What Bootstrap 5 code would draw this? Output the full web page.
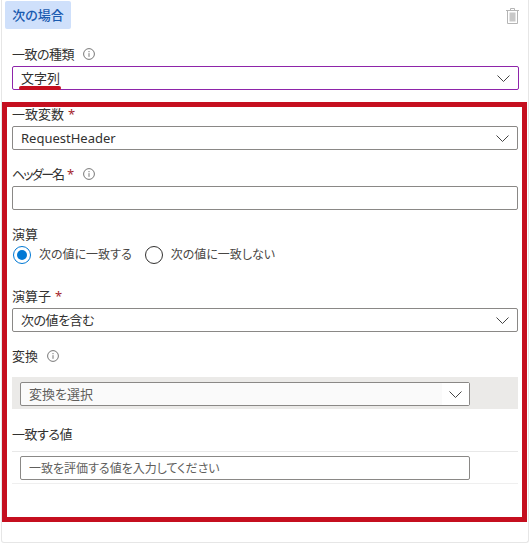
<!DOCTYPE html>
<html lang="ja">
<head>
  <meta charset="UTF-8">
  <meta name="viewport" content="width=device-width, initial-scale=1.0">
  <title>次の場合</title>
  <link href="https://cdn.jsdelivr.net/npm/bootstrap@5.3.3/dist/css/bootstrap.min.css" rel="stylesheet">
  <style>
    body {
      background-color: #fff;
      color: #323130;
      font-family: "Noto Sans", "Noto Sans CJK JP", sans-serif;
      font-size: 13px;
      font-feature-settings: "palt";
      line-height: 18px;
      overflow: hidden;
    }
    .rule-card {
      width: 528px;
      height: 543px;
      margin-left: 1px;
      padding-top: 1px;
      border-left: 1px solid #e6e6e6;
      border-right: 1px solid #e6e6e6;
      border-bottom: 1px solid #e6e6e6;
      border-bottom-left-radius: 3px;
      border-bottom-right-radius: 3px;
    }
    .rule-head {
      height: 28px;
      padding-right: 9px;
    }
    .cond-chip {
      width: 66px;
      height: 28px;
      margin-left: 3px;
      background-color: #cfe0fb;
      border-radius: 2px;
      color: #1a5bb0;
      font-weight: 500;
      line-height: 28px;
      text-align: center;
    }
    .trash-icon {
      width: 13px;
      height: 16px;
      margin-top: 7px;
    }
    .match-block {
      padding: 17px 9px 0 10px;
    }
    .field-label {
      height: 16px;
      line-height: 16px;
      margin-bottom: 4px;
    }
    .tight-text {
      letter-spacing: -0.5px;
    }
    .kana-text {
      letter-spacing: -2px;
    }
    .req {
      color: #a4262c;
      margin-left: 4px;
      letter-spacing: 0;
    }
    .info-icon {
      width: 12px;
      height: 12px;
      margin-left: 9px;
      vertical-align: -1px;
    }
    .fake-select, .fake-input {
      height: 24px;
      background-color: #fff;
      border: 1px solid #8a8886;
      border-radius: 2px;
      padding: 0 8px;
      line-height: 22px;
    }
    .fake-input {
      width: 100%;
      display: block;
      font: inherit;
      font-feature-settings: "palt";
      color: #323130;
      outline: none;
    }
    .fake-input::placeholder {
      color: #605e5c;
      opacity: 1;
      font-size: 12px;
    }
    .select-purple {
      border-color: #8e24aa;
    }
    .chevron {
      width: 13px;
      height: 7px;
    }
    .type-value {
      position: relative;
    }
    .type-value::after {
      content: "";
      position: absolute;
      left: -2px;
      right: -1px;
      top: 19px;
      height: 4px;
      border-radius: 2px;
      background-color: #c50f1f;
    }
    .red-frame {
      width: 525px;
      height: 420px;
      margin-top: 12px;
      border: 5px solid #c50f1f;
      padding: 0 4px 0 5px;
    }
    .first-label {
      margin-top: -1px;
    }
    .form-gap {
      margin-top: 16px;
    }
    .radio-row {
      height: 20px;
      margin-top: -1px;
      margin-left: 1px;
      gap: 8px;
      color: #484644;
      font-size: 12px;
    }
    .radio-dot {
      width: 18px;
      height: 18px;
      border-radius: 50%;
      border: 1px solid #323130;
      background-color: #fff;
      flex: none;
    }
    .radio-dot.on {
      border-color: #0078d4;
      display: flex;
      align-items: center;
      justify-content: center;
    }
    .radio-dot.on::before {
      content: "";
      width: 10px;
      height: 10px;
      border-radius: 50%;
      background-color: #0078d4;
    }
    .radio-second {
      margin-left: 5px;
    }
    .operator-label {
      margin-top: 23px;
    }
    .pick-band {
      height: 32px;
      margin-top: 13px;
      padding: 5px 48px 0 8px;
      background-color: #ebeae8;
    }
    .pick-select {
      height: 24px;
      background-color: #fafafa;
      border: 1px solid #8a8886;
      border-radius: 2px;
      padding-left: 8px;
      line-height: 22px;
      color: #605e5c;
    }
    .pick-arrow {
      width: 27px;
      height: 22px;
      background-color: #fff;
    }
    .value-label {
      margin-top: 17px;
      margin-bottom: 9px;
    }
    .value-row {
      height: 33px;
      padding: 4px 48px 0 8px;
      border-top: 1px solid #e8e8e8;
      border-bottom: 1px solid #efefef;
    }
  </style>
</head>
<body>
  <div class="rule-card">
    <div class="rule-head d-flex justify-content-between align-items-start">
      <div class="cond-chip">次の場合</div>
      <svg class="trash-icon" viewBox="0 0 13 16" fill="none" stroke="#b5b5b5" stroke-width="1">
        <path d="M0 2.5h13M4.5 2.5v-2h4v2M1.5 2.5v13h10v-13"/>
        <rect x="3.5" y="4.5" width="6" height="9" fill="#c8c8c8" stroke="none"/>
      </svg>
    </div>

    <div class="match-block">
      <div class="field-label tight-text">一致の種類<svg class="info-icon" viewBox="0 0 12 12" fill="none" stroke="#777"><circle cx="6" cy="6" r="5.4"/><path d="M6 5.2v3.6M6 3v1.2"/></svg></div>
      <div class="fake-select select-purple d-flex justify-content-between align-items-center">
        <span class="type-value">文字列</span>
        <svg class="chevron" viewBox="0 0 13 7" fill="none" stroke="#444"><path d="M0.5 0.5l6 6 6-6"/></svg>
      </div>
    </div>

    <div class="red-frame">
      <div class="field-label first-label">一致変数<span class="req">*</span></div>
      <div class="fake-select d-flex justify-content-between align-items-center">
        <span>RequestHeader</span>
        <svg class="chevron" viewBox="0 0 13 7" fill="none" stroke="#444"><path d="M0.5 0.5l6 6 6-6"/></svg>
      </div>

      <div class="field-label form-gap"><span class="kana-text">ヘッダー名</span><span class="req">*</span><svg class="info-icon" viewBox="0 0 12 12" fill="none" stroke="#777"><circle cx="6" cy="6" r="5.4"/><path d="M6 5.2v3.6M6 3v1.2"/></svg></div>
      <input class="fake-input" type="text">

      <div class="field-label form-gap">演算</div>
      <div class="radio-row d-flex align-items-center">
        <span class="radio-dot on"></span><span>次の値に一致する</span>
        <span class="radio-dot radio-second"></span><span>次の値に一致しない</span>
      </div>

      <div class="field-label operator-label">演算子<span class="req">*</span></div>
      <div class="fake-select d-flex justify-content-between align-items-center">
        <span class="tight-text">次の値を含む</span>
        <svg class="chevron" viewBox="0 0 13 7" fill="none" stroke="#444"><path d="M0.5 0.5l6 6 6-6"/></svg>
      </div>

      <div class="field-label form-gap">変換<svg class="info-icon" viewBox="0 0 12 12" fill="none" stroke="#777"><circle cx="6" cy="6" r="5.4"/><path d="M6 5.2v3.6M6 3v1.2"/></svg></div>
      <div class="pick-band">
        <div class="pick-select d-flex justify-content-between align-items-center">
          <span>変換を選択</span>
          <span class="pick-arrow d-flex align-items-center justify-content-center">
            <svg class="chevron" viewBox="0 0 13 7" fill="none" stroke="#444"><path d="M0.5 0.5l6 6 6-6"/></svg>
          </span>
        </div>
      </div>

      <div class="field-label value-label tight-text">一致する値</div>
      <div class="value-row">
        <input class="fake-input" type="text" placeholder="一致を評価する値を入力してください">
      </div>
    </div>
  </div>

  <script src="https://cdn.jsdelivr.net/npm/bootstrap@5.3.3/dist/js/bootstrap.bundle.min.js"></script>
</body>
</html>
